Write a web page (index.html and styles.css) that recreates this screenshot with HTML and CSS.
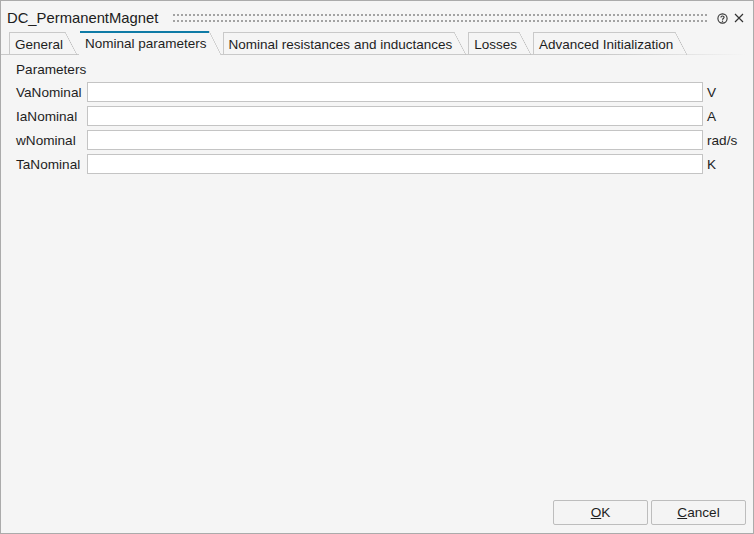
FILE: index.html
```html
<!DOCTYPE html>
<html lang="en">
  <head>
    <meta charset="UTF-8" />
    <title>DC_PermanentMagnet</title>
    <link rel="stylesheet" href="styles.css">
  </head>
  <body>
    <div class="dialog">
      <div class="titleBar">
        <span class="title">DC_PermanentMagnet</span>
        <div class="grip"></div>
        <svg class="helpIcon" width="11" height="11" viewBox="0 0 11 11">
          <circle cx="5.5" cy="5.5" r="4.6" fill="none" stroke="#333" stroke-width="1.1" />
          <path d="M3.9 4.4 C3.9 2.6 7.1 2.6 7.1 4.3 C7.1 5.4 5.5 5.5 5.5 6.7" fill="none" stroke="#333" stroke-width="1.1" />
          <circle cx="5.5" cy="8.3" r="0.7" fill="#333" />
        </svg>
        <svg class="closeIcon" width="10" height="10" viewBox="0 0 10 10">
          <path d="M1 1 L9 9 M9 1 L1 9" stroke="#333" stroke-width="1.2" />
        </svg>
      </div>

      <div class="tabs">
        <div class="tab">General</div>
        <div class="tab active">Nominal parameters</div>
        <div class="tab">Nominal resistances and inductances</div>
        <div class="tab">Losses</div>
        <div class="tab">Advanced Initialization</div>
      </div>

      <div class="content">
        <div class="groupTitle">Parameters</div>
        <div class="paramGrid">
          <label class="paramName">VaNominal</label>
          <input class="paramInput" type="text" />
          <span class="unit">V</span>

          <label class="paramName">IaNominal</label>
          <input class="paramInput" type="text" />
          <span class="unit">A</span>

          <label class="paramName">wNominal</label>
          <input class="paramInput" type="text" />
          <span class="unit">rad/s</span>

          <label class="paramName">TaNominal</label>
          <input class="paramInput" type="text" />
          <span class="unit">K</span>
        </div>
      </div>

      <div class="footer">
        <button class="dlgButton"><u>O</u>K</button>
        <button class="dlgButton"><u>C</u>ancel</button>
      </div>
    </div>
  </body>
</html>
```

FILE: styles.css
```css
* {
  box-sizing: border-box;
}

body {
  margin: 0;
  font-family: "Liberation Sans", Arial, sans-serif;
  font-size: 13.6px;
  color: #1e1e1e;
}

.dialog {
  width: 754px;
  height: 534px;
  border: 1px solid #ababab;
  background-color: #f5f5f5;
  display: flex;
  flex-direction: column;
}

.titleBar {
  height: 30px;
  padding: 4px 0 0 6px;
  display: flex;
  align-items: center;
}

.title {
  font-size: 14.8px;
  color: #202020;
}

.grip {
  flex: 1;
  height: 12px;
  margin: 0 10px 0 14px;
  background-image: radial-gradient(circle, #a3a3a3 0.9px, transparent 1.3px);
  background-size: 4px 6px;
  background-position: 0 0;
}

.helpIcon {
  margin-right: 6px;
}

.closeIcon {
  margin-right: 9px;
}

.tabs {
  display: flex;
  align-items: flex-end;
  gap: 2px;
  height: 24px;
  padding-left: 8px;
  font-size: 13.5px;
  background: linear-gradient(to right, #c9c9c9 80%, rgba(201, 201, 201, 0) 99%) left bottom / 100% 1px no-repeat;
}

.tab {
  height: 23px;
  padding: 0 14px 0 5px;
  line-height: 25px;
  white-space: nowrap;
  border-left: 1px solid #c9c9c9;
  background:
    linear-gradient(#c9c9c9, #c9c9c9) left top / calc(100% - 12px) 1px no-repeat,
    linear-gradient(to top right, transparent calc(50% - 0.6px), #bdbdbd 50%, transparent calc(50% + 0.6px)) right top / 12px 100% no-repeat;
}

.tab.active {
  height: 24px;
  line-height: 26px;
  background:
    linear-gradient(#0f7ba6, #0f7ba6) left top / calc(100% - 12px) 2px no-repeat,
    linear-gradient(to top right, transparent calc(50% - 0.6px), #bdbdbd 50%, transparent calc(50% + 0.6px)) right top / 12px 100% no-repeat,
    #f5f5f5;
  border-left: 1px solid #f5f5f5;
}

.content {
  padding: 7px 3px 0 15px;
}

.groupTitle {
  height: 16px;
  line-height: 16px;
  margin-bottom: 4px;
}

.paramGrid {
  display: grid;
  grid-template-columns: 71px 1fr 47px;
  row-gap: 4px;
  align-items: center;
}

.paramInput {
  height: 20px;
  margin: 0;
  border: 1px solid #c4c4c4;
  background-color: #fff;
  font: inherit;
}

.unit {
  padding-left: 4px;
}

.footer {
  margin-top: auto;
  display: flex;
  justify-content: flex-end;
  gap: 3px;
  padding: 0 7px 8px 0;
}

.dlgButton {
  width: 95px;
  height: 25px;
  border: 1px solid #bdbdbd;
  border-radius: 2px;
  background-color: #f4f4f4;
  font: inherit;
  color: #1e1e1e;
  padding: 0;
}
```
